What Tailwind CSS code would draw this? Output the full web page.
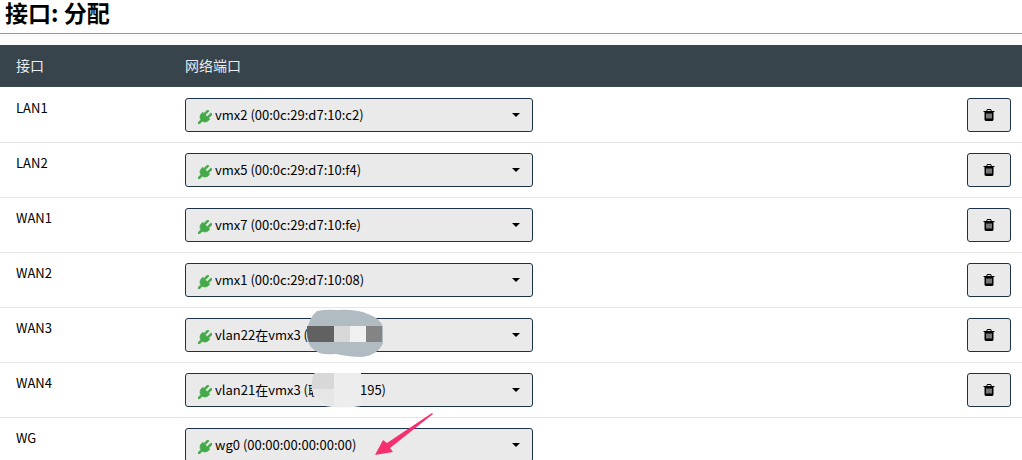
<!DOCTYPE html>
<html lang="zh-CN">
<head>
    <meta charset="UTF-8">
    <meta name="viewport" content="width=device-width, initial-scale=1.0">
    <title>接口: 分配</title>
    <script src="https://cdn.jsdelivr.net/npm/@tailwindcss/browser@4"></script>
</head>
<body class="h-screen overflow-hidden bg-white font-['Noto_Sans_CJK_SC',sans-serif] text-[13px] leading-5 text-black">
    <!-- Icons -->
    <svg class="hidden">
        <symbol id="plug" viewBox="0 0 1792 1792">
            <path stroke-width="90" d="M1755 453q37 38 37 90.500t-37 90.500l-401 400 150 150-160 160q-163 163-389.500 186.500t-411.500-100.500l-362 362h-181v-181l362-362q-124-185-100.500-411.500t186.500-389.500l160-160 150 150 400-401q38-37 91-37t90 37 37 90.500-37 90.500l-400 401 234 234 401-400q38-37 91-37t90 37z"/>
        </symbol>
        <symbol id="trash" viewBox="0 0 1792 1792">
            <path fill-rule="evenodd" d="M704 736v576q0 14-9 23t-23 9h-64q-14 0-23-9t-9-23v-576q0-14 9-23t23-9h64q14 0 23 9t9 23zm256 0v576q0 14-9 23t-23 9h-64q-14 0-23-9t-9-23v-576q0-14 9-23t23-9h64q14 0 23 9t9 23zm256 0v576q0 14-9 23t-23 9h-64q-14 0-23-9t-9-23v-576q0-14 9-23t23-9h64q14 0 23 9t9 23zM672 384h448l-48-117q-7-9-17-11h-317q-10 2-17 11zM1600 416v64q0 14-9 23t-23 9h-96v948q0 83-47 143.500t-113 60.500h-832q-66 0-113-58.500t-47-141.500v-952h-96q-14 0-23-9t-9-23v-64q0-14 9-23t23-9h309l70-167q15-37 54-63t79-26h320q40 0 79 26t54 63l70 167h309q14 0 23 9t9 23z"/>
        </symbol>
    </svg>

    <header class="border-b border-[#929699] px-[5px] pb-[9px]">
        <h1 class="text-[23px] leading-6 font-bold">接口: 分配</h1>
    </header>

    <main class="bg-[#fdfcfd] pt-[11px]">
        <table class="w-full table-fixed bg-white">
            <thead class="bg-[#37444c] text-left text-sm text-[#e8ecee]">
                <tr>
                    <th class="h-[42px] w-[185px] pb-[2px] pl-4 font-normal">接口</th>
                    <th class="pb-[2px] font-normal">网络端口</th>
                    <th class="w-[100px]"></th>
                </tr>
            </thead>
            <tbody id="rows"></tbody>
        </table>
    </main>

    <script>
        // Pixelated patches over the private part of a port name
        const grayPatch = `
            <svg class="pointer-events-none absolute top-0 left-[121px]" width="80" height="52" viewBox="0 0 80 52" aria-hidden="true">
                <path d="M11 3Q20 1 32 2Q50 1 62 6Q74 10 77 19V35Q72 47 56 49Q44 49 30 46Q12 48 5 39Q1 34 1 25Q2 10 11 3Z" fill="#b0bbc2"/>
                <path d="M1 18H28V34H3Q1 30 1 25Z" fill="#616161"/>
                <path d="M28 18H44V34H28Z" fill="#d8d8d8"/>
                <path d="M44 18H60V34H44Z" fill="#f0f0f0"/>
                <path d="M60 18H76V34H60Z" fill="#848484"/>
            </svg>`;
        const lightPatch = `
            <svg class="pointer-events-none absolute top-2 left-[126px]" width="52" height="38" viewBox="0 0 52 38" aria-hidden="true">
                <path d="M4 2H50V35Q32 38 14 35Q2 29 1 18Q0 6 4 2Z" fill="#ededed"/>
                <path d="M4 2H23V18H1Q0 6 4 2Z" fill="#d8d8d8"/>
                <path d="M1 18H23V36Q4 32 1 18Z" fill="#e6e6e6"/>
            </svg>`;
        const arrow = `
            <svg class="pointer-events-none absolute -top-2 left-[188px]" width="64" height="48" viewBox="0 0 64 48" aria-hidden="true">
                <path d="M59 3L60 4L17 38L20 42L2 45L10 30L14 33Z" fill="#f6306e"/>
            </svg>`;

        const interfaces = [
            { name: 'LAN1', port: 'vmx2 (00:0c:29:d7:10:c2)', removable: true },
            { name: 'LAN2', port: 'vmx5 (00:0c:29:d7:10:f4)', removable: true },
            { name: 'WAN1', port: 'vmx7 (00:0c:29:d7:10:fe)', removable: true },
            { name: 'WAN2', port: 'vmx1 (00:0c:29:d7:10:08)', removable: true },
            { name: 'WAN3', port: 'vlan22在vmx3 (联', removable: true, extra: grayPatch },
            { name: 'WAN4', port: 'vlan21在vmx3 (联&emsp;&emsp;&emsp;195)', removable: true, extra: lightPatch },
            { name: 'WG', port: 'wg0 (00:00:00:00:00:00)', removable: false, extra: arrow },
        ];

        const trashButton = (name) => `
            <button type="button" aria-label="删除 ${name}" class="ml-auto flex h-[34px] w-11 items-center justify-center rounded-[3px] border border-[#1c3347] bg-[#eaeaea]">
                <svg class="size-[14px]" aria-hidden="true"><use href="#trash"/></svg>
            </button>`;

        document.getElementById('rows').innerHTML = interfaces.map(({ name, port, removable, extra = '' }) => `
            <tr class="border-t border-[#e6e6e6] first:border-white">
                <td class="py-[10px] pl-4 align-top"><label for="${name}">${name}</label></td>
                <td class="relative py-[10px]">
                    <div class="relative w-[348px]">
                        <select id="${name}" class="block h-[34px] w-full appearance-none rounded-[3px] border border-[#1c3347] bg-[#eaeaea] pr-8 pl-[29px]">
                            <option>${port}</option>
                        </select>
                        <svg class="pointer-events-none absolute top-3 left-[13px] size-[14px] fill-[#44a948] stroke-[#44a948]" aria-hidden="true"><use href="#plug"/></svg>
                        <svg class="pointer-events-none absolute top-[15px] right-3 h-1 w-[10px]" viewBox="0 0 10 4" aria-hidden="true"><path d="M1 0H9L5 4Z"/></svg>
                    </div>
                    ${extra}
                </td>
                <td class="py-[10px] pr-[11px]">${removable ? trashButton(name) : ''}</td>
            </tr>
        `).join('');
    </script>
</body>
</html>
